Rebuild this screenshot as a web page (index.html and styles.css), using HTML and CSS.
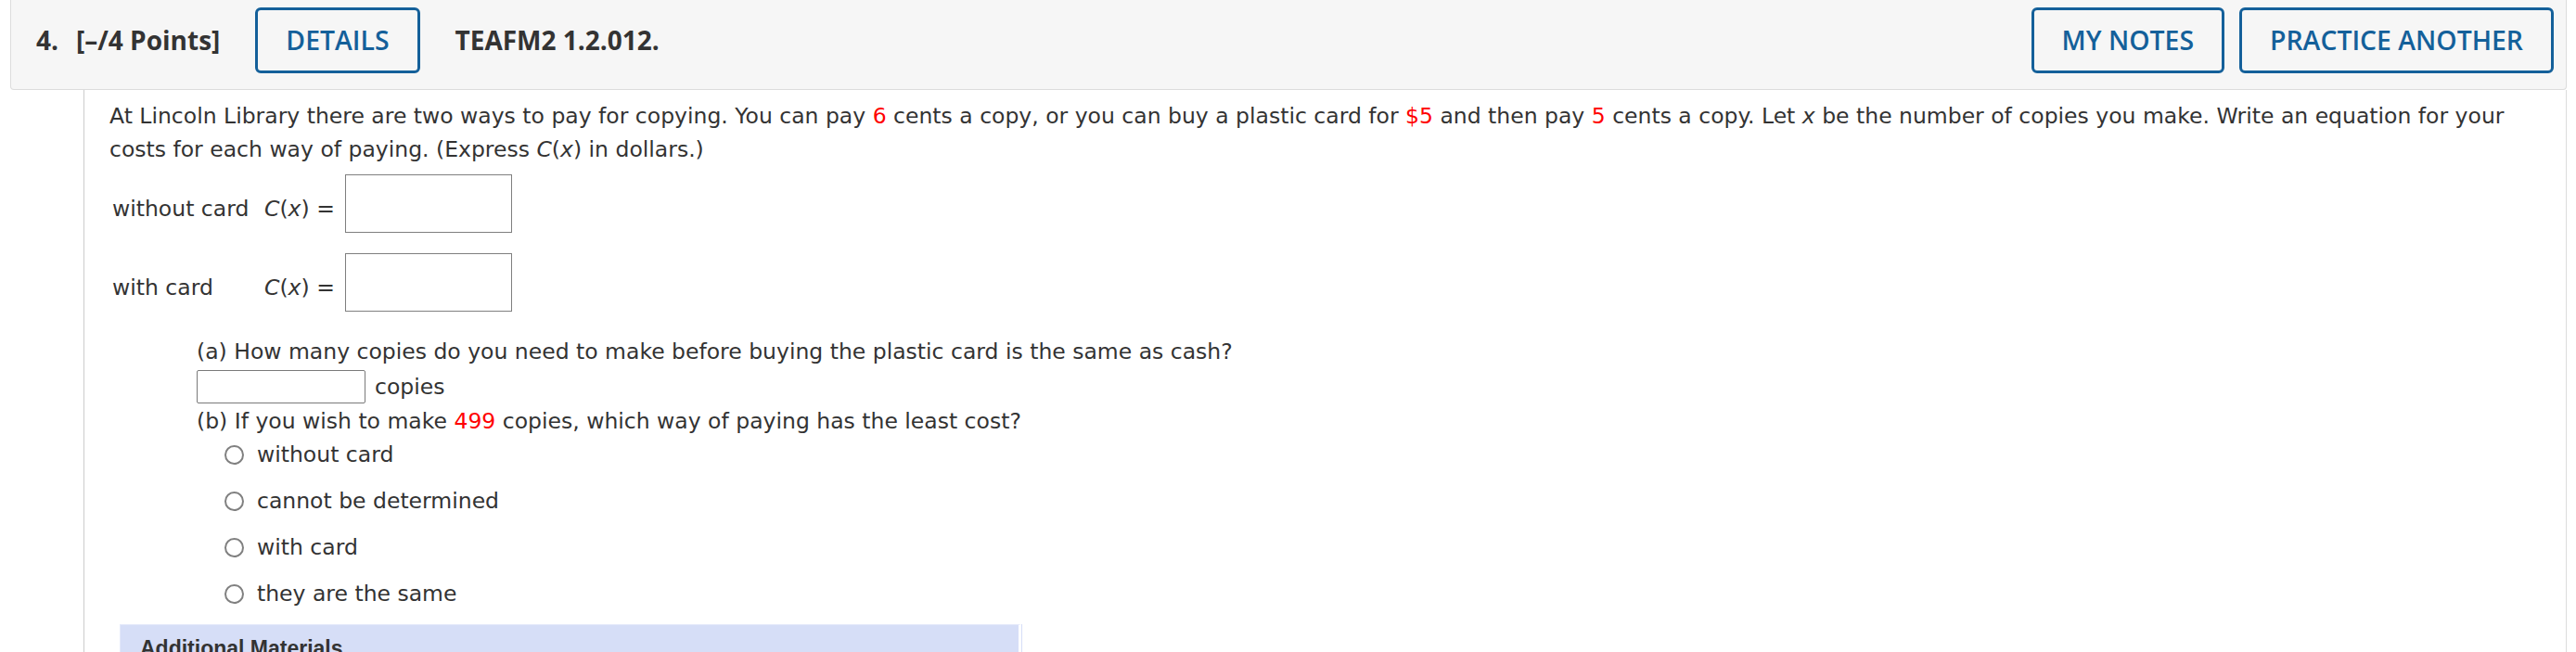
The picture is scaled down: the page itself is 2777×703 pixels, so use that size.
FILE: index.html
```html
<!DOCTYPE html>
<html lang="en">
<head>
<meta charset="utf-8">
<title>Question 4</title>
<link rel="stylesheet" href="styles.css">
</head>
<body>
<div class="question">
  <div class="qhead">
    <span class="qnum">4.</span>
    <span class="points">[–/4 Points]</span>
    <button class="btn btn-details" type="button">DETAILS</button>
    <span class="qcode">TEAFM2 1.2.012.</span>
    <button class="btn btn-notes" type="button">MY NOTES</button>
    <button class="btn" type="button">PRACTICE ANOTHER</button>
  </div>
  <div class="qbody">
    <p class="stem">At Lincoln Library there are two ways to pay for copying. You can pay <span class="red">6</span> cents a copy, or you can buy a plastic card for <span class="red">$5</span> and then pay <span class="red">5</span> cents a copy. Let <i>x</i> be the number of copies you make. Write an equation for your costs for each way of paying. (Express <i>C</i>(<i>x</i>) in dollars.)</p>
    <div class="eqs">
      <span class="eq-label">without card</span>
      <span class="eq-fn"><i>C</i>(<i>x</i>) =</span>
      <input class="box" type="text" aria-label="without card">
      <span class="eq-label">with card</span>
      <span class="eq-fn"><i>C</i>(<i>x</i>) =</span>
      <input class="box" type="text" aria-label="with card">
    </div>
    <div class="parts">
      <div class="line">(a) How many copies do you need to make before buying the plastic card is the same as cash?</div>
      <div class="copies-row">
        <input class="small-box" type="text" aria-label="copies">
        <span class="unit">copies</span>
      </div>
      <div class="line">(b) If you wish to make <span class="red">499</span> copies, which way of paying has the least cost?</div>
      <div class="options">
        <label class="opt"><input class="radio" type="radio" name="b"><span>without card</span></label>
        <label class="opt"><input class="radio" type="radio" name="b"><span>cannot be determined</span></label>
        <label class="opt"><input class="radio" type="radio" name="b"><span>with card</span></label>
        <label class="opt"><input class="radio" type="radio" name="b"><span>they are the same</span></label>
      </div>
    </div>
    <div class="materials">Additional Materials</div>
  </div>
</div>
</body>
</html>
```
FILE: styles.css
```css
html, body {
  margin: 0;
  padding: 0;
  background: #ffffff;
}

body {
  font-family: "DejaVu Sans", Verdana, sans-serif;
  font-size: 23.5px;
  color: #333333;
  overflow: hidden;
}

.question {
  margin-left: 11px;
  width: 2756px;
}

.qhead {
  display: flex;
  align-items: center;
  box-sizing: border-box;
  height: 97px;
  padding: 0 13px 10px 27px;
  background: #f6f6f6;
  border: 1px solid #dcdcdc;
  border-top: none;
  border-radius: 0 0 4px 4px;
  font-family: "Open Sans", "Liberation Sans", sans-serif;
  font-size: 28px;
  font-weight: 700;
  color: #333333;
}

.qnum {
  margin-right: 19px;
}

.points {
  margin-right: 38px;
}

.btn {
  box-sizing: border-box;
  height: 71px;
  padding: 0 30px;
  border: 3px solid #14609a;
  border-radius: 6px;
  background: transparent;
  color: #14609a;
  font-family: "Open Sans", "Liberation Sans", sans-serif;
  font-size: 28.4px;
  font-weight: 600;
  line-height: 1;
  cursor: pointer;
}

.btn-details {
  margin-right: 38px;
}

.btn-notes {
  margin-left: auto;
  margin-right: 16px;
}

.qbody {
  margin-left: 79px;
  border-left: 1px solid #cccccc;
  border-right: 1px solid #dcdcdc;
  padding: 10px 0 30px 27px;
}

.stem {
  margin: 0;
  padding-right: 20px;
  line-height: 36px;
}

.red {
  color: #ff0000;
}

.eqs {
  display: grid;
  grid-template-columns: 164px 87px 180px;
  row-gap: 22px;
  align-items: center;
  margin-top: 9px;
  padding-left: 3px;
}

.eq-label,
.eq-fn {
  line-height: 36px;
  padding-top: 10px;
}

.box {
  box-sizing: border-box;
  width: 180px;
  height: 63px;
  margin: 0;
  border: 1px solid #7f7f7f;
  border-radius: 0;
  background: #ffffff;
  font: inherit;
}

.parts {
  margin-top: 25px;
  padding-left: 94px;
  line-height: 36px;
}

.copies-row {
  display: flex;
  align-items: center;
  height: 36px;
  margin: 2px 0 1px;
}

.small-box {
  box-sizing: border-box;
  width: 182px;
  height: 36px;
  margin: 0 10px 0 0;
  border: 1px solid #7a7a7a;
  border-radius: 2px;
  background: #ffffff;
  font: inherit;
}

.options {
  padding-left: 30px;
}

.opt {
  display: flex;
  align-items: center;
  height: 36px;
  margin-top: 14px;
}

.opt:first-child {
  margin-top: 0;
}

.radio {
  appearance: none;
  -webkit-appearance: none;
  box-sizing: border-box;
  width: 21px;
  height: 21px;
  margin: 0 14px 0 0;
  border: 2px solid #808080;
  border-radius: 50%;
  background: #ffffff;
}

.materials {
  box-sizing: border-box;
  width: 972px;
  margin: 15px 0 0 11px;
  padding: 12px 21px 40px;
  background: #d6def7;
  border: 1px solid #e4e9fa;
  border-right: 3px solid #ffffff;
  box-shadow: 1px 0 0 #d6def7;
  font-family: "Liberation Sans", Arial, sans-serif;
  font-size: 23px;
  font-weight: 700;
  color: #333333;
}
```
